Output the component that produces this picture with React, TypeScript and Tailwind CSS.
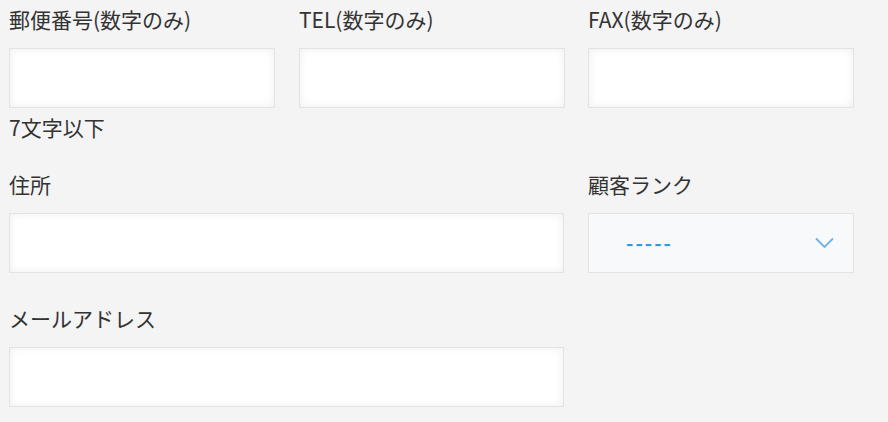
import React from 'react';

const inputCls =
  'h-[60px] bg-white border border-[#e3e3e3] shadow-[inset_0_0_8px_rgba(0,0,0,0.07)]';

const Label: React.FC<{ text: string }> = ({ text }) => (
  <div className="h-[30px] leading-[30px] whitespace-nowrap">{text}</div>
);

const Field: React.FC<{ label: string; width: string; help?: string }> = ({ label, width, help }) => (
  <div className={width}>
    <Label text={label} />
    <div className={`mt-[14px] ${inputCls}`} />
    {help && <div className="mt-[4px] h-[30px] leading-[30px]">{help}</div>}
  </div>
);

const App: React.FC = () => {
  return (
    <div
      className="w-[888px] h-[422px] overflow-hidden bg-[#f4f4f4] text-[#333] text-[21px] pl-[9px] pt-[4px]"
      style={{ fontFamily: '"Noto Sans CJK JP", "Noto Sans", sans-serif' }}
    >
      {/* row 1 */}
      <div className="flex items-start">
        <Field label="郵便番号(数字のみ)" width="w-[266px]" help="7文字以下" />
        <div className="w-[266px] ml-[24px]">
          <Label text="TEL(数字のみ)" />
          <div className={`mt-[14px] ${inputCls}`} />
        </div>
        <div className="w-[266px] ml-[23px]">
          <Label text="FAX(数字のみ)" />
          <div className={`mt-[14px] ${inputCls}`} />
        </div>
      </div>

      {/* row 2 */}
      <div className="flex items-start mt-[27px]">
        <Field label="住所" width="w-[555px]" />
        <div className="w-[266px] ml-[24px]">
          <Label text="顧客ランク" />
          <div className="mt-[14px] h-[60px] bg-[#f7f9fa] border border-[#e3e3e3] flex items-center justify-between pl-[37px] pr-[19px]">
            <span className="text-[#3498db] text-[20px] tracking-[2px] font-bold leading-none">-----</span>
            <svg width="19" height="12" viewBox="0 0 19 12" fill="none">
              <path d="M1 1.5 L9.5 10 L18 1.5" stroke="#6cb4e7" strokeWidth="1.8" />
            </svg>
          </div>
        </div>
      </div>

      {/* row 3 */}
      <div className="flex items-start mt-[30px]">
        <Field label="メールアドレス" width="w-[555px]" />
      </div>
    </div>
  );
};

export default App;
